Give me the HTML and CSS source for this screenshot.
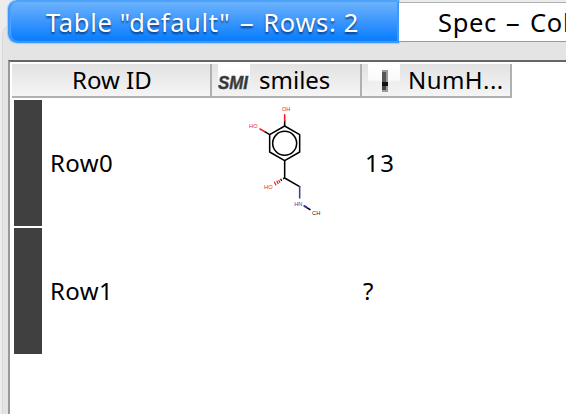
FILE: index.html
```html
<!DOCTYPE html>
<html lang="en">
<head>
<meta charset="utf-8">
<title>Table view</title>
<link rel="stylesheet" href="styles.css">
</head>
<body>
<div class="window">
  <nav class="tabs">
    <div class="tab tab-active"><span>Table "default" <span class="dash">–</span> Rows: 2</span></div>
    <div class="tab tab-next"><span>Spec <span class="dash">–</span> Col</span></div>
  </nav>
  <main class="pane">
    <section class="scroll">
      <header class="head">
        <div class="th th-id"><span class="t-id">Row ID</span></div>
        <div class="th">
          <svg class="icon" viewBox="0 0 32 32">
            <defs><linearGradient id="g" x2="0" y2="1"><stop offset="0" stop-color="#fff"/><stop offset=".5" stop-color="#fafafa"/><stop offset=".55" stop-color="#eee"/><stop offset="1" stop-color="#f2f2f2"/></linearGradient></defs>
            <rect width="32" height="32" fill="url(#g)"/>
            <text x="0" y="25" textLength="30" lengthAdjust="spacingAndGlyphs" class="smi">SMI</text>
          </svg>
          <span class="t-smiles">smiles</span>
        </div>
        <div class="th">
          <svg class="icon" viewBox="0 0 32 32">
            <rect width="32" height="32" fill="url(#g)"/>
            <path d="M14 6h6v22h-6z" fill="#999"/>
            <path d="M14 8h4v10h-4z" fill="#555"/>
            <path d="M14 18h6v4h-6z" fill="#111"/>
            <path d="M14 22h4v4h-4z" fill="#444"/>
          </svg>
          <span class="t-num">NumH...</span>
        </div>
      </header>
      <div class="row">
        <div class="mark"></div>
        <div class="id">Row0</div>
        <div class="mol">
          <svg viewBox="0 0 300 375" width="100" height="125">
            <g fill="none" stroke="#000" stroke-width="4.6" stroke-linecap="round" stroke-linejoin="round">
              <path d="M149 84L194 110V162L149 188L104 162V110Z"/>
              <circle cx="149" cy="136" r="36"/>
              <path d="M149 188V240L194 266"/>
              <path d="M149 84V68M104 110L89 101M208 324L225 335"/>
              <path d="M149 68V50M89 101L75 93" stroke="#f01818"/>
              <path d="M194 266V300M208 324L216 329" stroke="#3c3ca8"/>
            </g>
            <g fill="none" stroke-width="3.6">
              <path d="M145 239L147 244M137 242L140 249" stroke="#000"/>
              <path d="M131 246L135 254M125 248L130 258M118 251L123 262" stroke="#f01818"/>
            </g>
            <g class="atom">
              <text x="141" y="39" textLength="25">OH</text>
              <text x="42" y="91" textLength="26">HO</text>
              <text x="87" y="273" textLength="26">HO</text>
              <text class="n" x="178" y="325" textLength="24">HN</text>
              <text class="c" x="231" y="351" textLength="25">CH</text>
            </g>
          </svg>
        </div>
        <div class="val val-num">13</div>
      </div>
      <div class="row">
        <div class="mark"></div>
        <div class="id">Row1</div>
        <div class="mol"></div>
        <div class="val">?</div>
      </div>
    </section>
  </main>
</div>
</body>
</html>
```

FILE: styles.css
```css
* { box-sizing: border-box; }
body {
  margin: 0;
  width: 566px;
  height: 414px;
  overflow: hidden;
  background: #ececec;
  color: #000;
  font: 24px/32px "Noto Sans", sans-serif;
  white-space: nowrap;
}
.window { padding-left: 2px; height: 414px; }
.tabs {
  position: relative;
  z-index: 1;
  display: flex;
  height: 44px;
  padding-left: 6px;
  font-size: 25.5px;
  letter-spacing: .67px;
}
.dash { display: inline-block; margin: 0 1px; transform: scaleX(1.1); padding: 0 1.5px; }
.tab-active {
  flex: none;
  width: 391px;
  height: 43px;
  padding-left: 36px;
  border: 2px solid #3d98fb;
  border-top-color: #4da3fb;
  border-radius: 9px 0 0 9px;
  background: linear-gradient(#6cb3fc, #2c8efe 65%, #057dff);
  box-shadow: inset 1px 0 1px #51a5ff, 0 0 1px 1px #a5cdf5;
  color: #fff;
  text-shadow: 0 2px 2px rgba(0, 20, 60, .65);
  line-height: 41px;
}
.tab-next {
  flex: 1;
  min-width: 0;
  height: 40px;
  margin-top: 2px;
  padding-left: 39px;
  border-top: 1px solid #b0b0b0;
  border-bottom: 1px solid #999;
  background: #fff;
  line-height: 38px;
}
.pane {
  height: 390px;
  margin-top: -18px;
  padding: 33px 0 0 5px;
  background: #e4e4e4;
  border-left: 1px solid #dadada;
  border-top: 1px solid #d8d8d8;
  border-top-left-radius: 8px;
}
.scroll {
  height: 356px;
  padding: 2px 0 0 2px;
  border-top: 2px solid #666;
  border-left: 2px solid #999;
  background: #fff;
}
.head { display: flex; height: 34px; }
.th {
  display: flex;
  width: 150px;
  padding-left: 6px;
  border-right: 2px solid #b0b0b0;
  border-bottom: 2px solid #b0b0b0;
  background: linear-gradient(#e2e2e2, #f5f5f5);
}
.th-id { width: 200px; padding-left: 60px; }
.icon { flex: none; width: 32px; height: 32px; margin-right: 9px; }
.t-num { margin-left: -1px; letter-spacing: .45px; }
.smi { font: italic bold 18px "Liberation Sans", sans-serif; fill: #333; stroke: #555; stroke-width: .5; }
.row { display: flex; height: 126px; margin: 2px 0 0 2px; line-height: 126px; }
.mark { width: 28px; background: #404040; }
.id { width: 193px; padding-left: 8px; letter-spacing: .4px; }
.mol { width: 127px; }
.mol svg { display: block; margin-top: -2px; }
.val { padding-left: 1px; }
.val-num { padding-left: 3px; letter-spacing: 1.6px; }
.atom { font: 17px "Liberation Sans", sans-serif; fill: #f01818; }
.atom .n { fill: #3c3ca8; }
.atom .c { fill: #222; }
```
